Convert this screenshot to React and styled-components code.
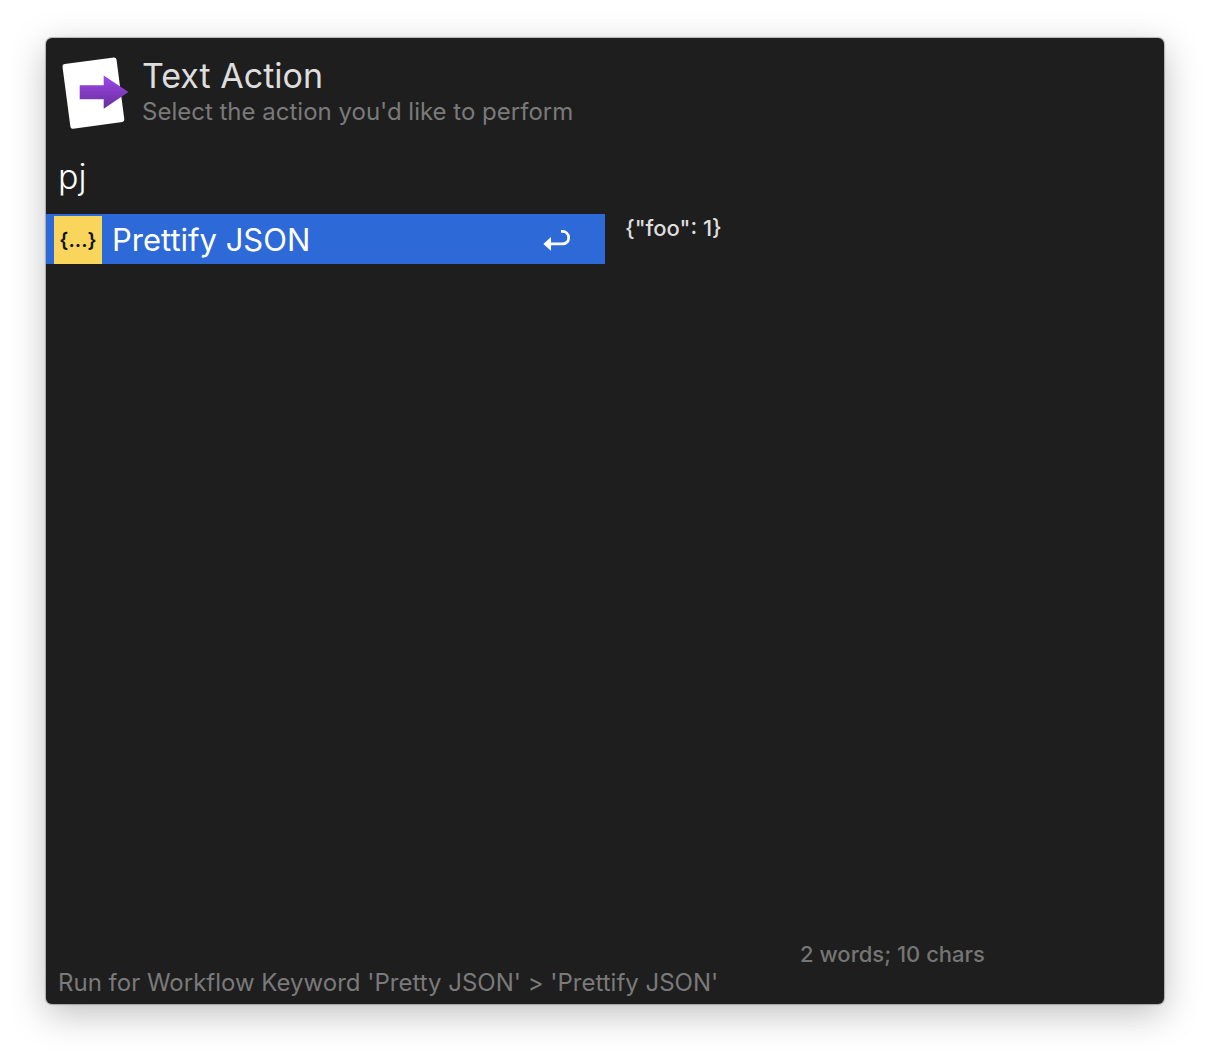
import React, { useState } from "react";
import styled, { createGlobalStyle } from "styled-components";

const GlobalStyle = createGlobalStyle`
  * { box-sizing: border-box; }
  body {
    margin: 0;
    background: #ffffff;
    font-family: Inter, "Liberation Sans", sans-serif;
    -webkit-font-smoothing: antialiased;
  }
`;

const Desktop = styled.div`
  min-height: 100vh;
  padding: 38px 46px 54px;
  display: flex;
`;

const Window = styled.main`
  flex: 1;
  min-width: 0;
  display: flex;
  flex-direction: column;
  background: #1e1e1e;
  border-radius: 6px;
  box-shadow: 0 0 1px 1px rgba(0, 0, 0, 0.25), 0 10px 36px rgba(0, 0, 0, 0.25);
`;

const Header = styled.header`
  display: flex;
  gap: 12px;
  padding: 16px 14px 0;
`;

const Heading = styled.div`
  display: flex;
  flex-direction: column;
`;

const Title = styled.h1`
  margin: 0;
  font-size: 34px;
  line-height: 44px;
  font-weight: 400;
  color: #dedede;
`;

const Subtitle = styled.p`
  margin: 0;
  font-size: 24px;
  line-height: 28px;
  color: #7a7a7a;
`;

const SearchInput = styled.input`
  width: 100%;
  height: 60px;
  margin-top: 16px;
  padding: 0 12px;
  border: 0;
  outline: 0;
  background: transparent;
  color: #ffffff;
  font: 300 34px/40px Inter, "Liberation Sans", sans-serif;
`;

const Body = styled.div`
  flex: 1;
  display: grid;
  grid-template-columns: 1fr 1fr;
  padding-top: 8px;
`;

const ResultList = styled.section`
  min-width: 0;
`;

const Result = styled.button`
  width: 100%;
  height: 50px;
  display: flex;
  align-items: center;
  gap: 10px;
  padding: 2px 34px 0 8px;
  border: 0;
  background: ${(p) => (p.$selected ? "#2d69d7" : "transparent")};
  color: #ffffff;
  font: 400 31px/40px Inter, "Liberation Sans", sans-serif;
  text-align: left;
`;

const ResultIcon = styled.span`
  width: 48px;
  height: 48px;
  display: flex;
  align-items: center;
  justify-content: center;
  background: #f9d55c;
  color: #111111;
  font-size: 20px;
  font-weight: 600;
`;

const ResultName = styled.span`
  flex: 1;
`;

const Preview = styled.section`
  display: flex;
  flex-direction: column;
  justify-content: space-between;
  padding: 0 4px 1px 20px;
  font-size: 22px;
  line-height: 28px;
  font-weight: 500;
`;

const PreviewText = styled.div`
  color: #dedede;
`;

const Stats = styled.div`
  color: #757575;
  text-align: center;
`;

const StatusBar = styled.footer`
  padding: 0 12px 7px;
  font-size: 24px;
  line-height: 28px;
  color: #7a7a7a;
`;

function ActionIcon() {
  return (
    <svg width="70" height="76" viewBox="0 0 70 76" aria-hidden="true">
      <defs>
        <linearGradient id="arrow" x1="0" y1="0" x2="0" y2="1">
          <stop offset="0" stopColor="#a046ea" />
          <stop offset="1" stopColor="#65309b" />
        </linearGradient>
      </defs>
      <path
        d="M4.7 10.1 53.8 3.6Q56 3.4 56.5 5.6L64.3 65.2Q64.6 67.5 62.4 68L13.2 74.7Q10.8 75 10.4 72.8L2.5 12.7Q2.2 10.5 4.7 10.1Z"
        fill="#fff"
      />
      <path d="M19.7 31.2H43.7V21.5L68.5 38 43.7 54.7V45.2H19.7Z" fill="url(#arrow)" />
    </svg>
  );
}

function ReturnIcon() {
  return (
    <svg width="28" height="24" viewBox="0 0 28 24" aria-hidden="true">
      <path
        d="M18 3.4H19.5A6.1 6.1 0 0 1 25.7 9.4Q25.7 15.9 18.7 15.9H6"
        fill="none"
        stroke="#fff"
        strokeWidth="2.7"
      />
      <path d="M0.3 15.9 8 8.9V22.8Z" fill="#fff" />
    </svg>
  );
}

export default function App() {
  const [query, setQuery] = useState("pj");
  return (
    <>
      <GlobalStyle />
      <Desktop>
        <Window>
          <Header>
            <ActionIcon />
            <Heading>
              <Title>Text Action</Title>
              <Subtitle>Select the action you'd like to perform</Subtitle>
            </Heading>
          </Header>
          <SearchInput
            type="text"
            aria-label="Text Action"
            spellCheck={false}
            value={query}
            onChange={(e) => setQuery(e.target.value)}
          />
          <Body>
            <ResultList>
              <Result type="button" $selected>
                <ResultIcon>{"{...}"}</ResultIcon>
                <ResultName>Prettify JSON</ResultName>
                <ReturnIcon />
              </Result>
            </ResultList>
            <Preview>
              <PreviewText>{'{"foo": 1}'}</PreviewText>
              <Stats>2 words; 10 chars</Stats>
            </Preview>
          </Body>
          <StatusBar>Run for Workflow Keyword 'Pretty JSON' &gt; 'Prettify JSON'</StatusBar>
        </Window>
      </Desktop>
    </>
  );
}
